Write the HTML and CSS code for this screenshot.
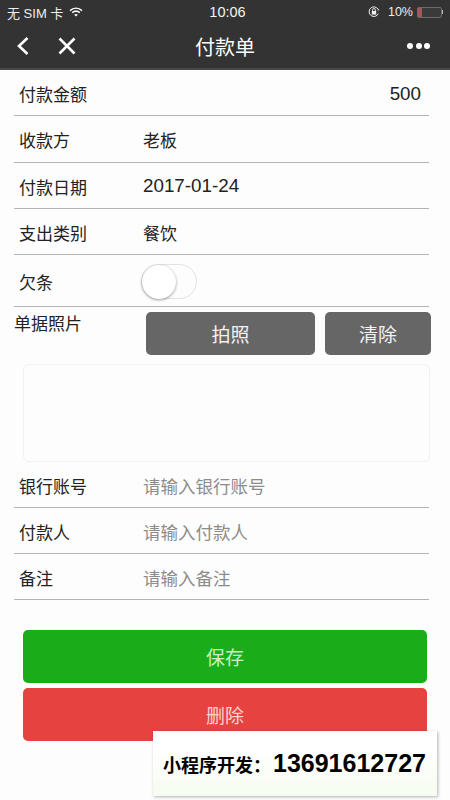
FILE: index.html
```html
<!DOCTYPE html>
<html lang="zh">
<head>
<meta charset="utf-8">
<title>付款单</title>
<link rel="stylesheet" href="styles.css">
</head>
<body>
<div class="page">
  <header class="top">
    <div class="status">
      <div class="status-left">
        <span>无 SIM 卡</span>
        <svg class="wifi" width="14" height="10" viewBox="0 0 14 10"><path d="M1 3.600C4.600.4 9.400.4 13 3.600" fill="none" stroke="#fff" stroke-width="1.500"/><path d="M3.200 5.700c2.400-2 5.200-2 7.600 0" fill="none" stroke="#fff" stroke-width="1.500"/><path d="M5.200 7.700c1.100-.9 2.500-.9 3.600 0L7 9.600z" fill="#fff"/></svg>
      </div>
      <div class="clock">10:06</div>
      <div class="status-right">
        <svg class="lock" width="12" height="12" viewBox="0 0 12 12"><path d="M10.300 7.600A4.800 4.800 0 1 1 10 3.200" fill="none" stroke="#eee" stroke-width="1"/><path d="M11.400 4.200 9.400 4.400 10 2.400z" fill="#eee"/><rect x="3.800" y="5" width="4.400" height="3.600" fill="#eee"/><path d="M4.600 5V3.900a1.400 1.400 0 0 1 2.800 0V5" fill="none" stroke="#eee" stroke-width=".9"/></svg>
        <span class="pct">10%</span>
        <span class="battery"><span class="battery-level"></span></span>
        <span class="battery-tip"></span>
      </div>
    </div>
    <nav class="nav">
      <div class="nav-left">
        <svg width="14" height="20" viewBox="0 0 14 20"><path d="M11.500 2 3 10l8.500 8" fill="none" stroke="#fff" stroke-width="2.600"/></svg>
        <svg width="20" height="20" viewBox="0 0 20 20"><path d="M2.500 2.500l15 15M17.500 2.500l-15 15" fill="none" stroke="#fff" stroke-width="2.600"/></svg>
      </div>
      <div class="nav-title">付款单</div>
      <div class="dots"><i></i><i></i><i></i></div>
    </nav>
  </header>

  <section class="rows">
    <div class="row"><span class="label">付款金额</span><span class="value num right">500</span></div>
    <div class="row"><span class="label">收款方</span><span class="value">老板</span></div>
    <div class="row"><span class="label">付款日期</span><span class="value num">2017-01-24</span></div>
    <div class="row"><span class="label">支出类别</span><span class="value">餐饮</span></div>
    <div class="row row-switch"><span class="label">欠条</span><span class="switch"><span class="knob"></span></span></div>
  </section>

  <section class="photo">
    <div class="photo-head">
      <span class="photo-label">单据照片</span>
      <button class="btn-gray btn-shot">拍照</button>
      <button class="btn-gray btn-clear">清除</button>
    </div>
    <div class="photo-box"></div>
  </section>

  <section class="rows rows-lower">
    <div class="row"><span class="label">银行账号</span><span class="value hint">请输入银行账号</span></div>
    <div class="row"><span class="label">付款人</span><span class="value hint">请输入付款人</span></div>
    <div class="row"><span class="label">备注</span><span class="value hint">请输入备注</span></div>
  </section>

  <section class="actions">
    <button class="btn-main btn-save">保存</button>
    <button class="btn-main btn-delete">删除</button>
  </section>

  <aside class="ad"><span class="ad-cn">小程序开发：</span><span class="ad-num">13691612727</span></aside>
</div>
</body>
</html>
```
FILE: styles.css
```css
* { box-sizing: border-box; }
html, body { margin: 0; padding: 0; }
body {
  width: 450px;
  height: 800px;
  overflow: hidden;
  background: #fdfdfd;
  font-family: "Liberation Sans", "Noto Sans CJK SC", sans-serif;
  color: #222;
}
.page { position: relative; width: 450px; height: 800px; }

.top {
  height: 70px;
  background: #333333;
  border-bottom: 2px solid #484848;
  color: #fff;
}
.status {
  height: 24px;
  padding: 0 7px;
  display: grid;
  grid-template-columns: 1fr auto 1fr;
  align-items: center;
  font-size: 13px;
  color: #eee;
}
.status-left { display: flex; align-items: center; gap: 6px; }
.wifi { margin-top: -1px; }
.clock { font-size: 14.500px; color: #f4f4f4; margin-left: 5px; }
.status-right { display: flex; align-items: center; justify-content: flex-end; }
.lock { margin-right: 8px; }
.pct { margin-right: 4px; font-size: 12.500px; }
.battery {
  display: block;
  width: 25px;
  height: 11px;
  border: 1px solid #6b6b6b;
  border-radius: 2px;
  background: #3a3a3a;
}
.battery-level { display: block; width: 4px; height: 100%; background: #a8555a; }
.battery-tip { display: block; width: 1px; height: 4px; background: #bbb; }

.nav {
  height: 44px;
  padding: 0 20px;
  display: grid;
  grid-template-columns: 1fr auto 1fr;
  align-items: center;
}
.nav-left { display: flex; align-items: center; gap: 27px; margin-left: -4px; }
.nav-title { font-size: 20px; }
.dots { display: flex; justify-content: flex-end; gap: 2.500px; }
.dots i { display: block; width: 6px; height: 6px; border-radius: 50%; background: #fff; }

.rows { padding: 0 21px 0 14px; }
.row {
  height: 46.300px;
  display: flex;
  align-items: center;
  border-bottom: 1px solid #b4b4b4;
  font-size: 17px;
  padding: 2px 0 0 5px;
}
.rows-lower .row { height: 46px; }
.label { width: 124px; flex: none; }
.value { flex: 1; }
.num { font-size: 18.800px; }
.right { text-align: right; padding-right: 8px; }
.hint { color: #8c8c8c; font-size: 17.500px; }
.row-switch { height: 52px; padding-top: 1px; }

.switch {
  position: relative;
  display: block;
  width: 56px;
  height: 35px;
  margin-left: -2px;
  border: 1px solid #e2e2e2;
  border-radius: 18px;
  background: #fdfdfd;
}
.knob {
  display: block;
  width: 34px;
  height: 34px;
  border-radius: 50%;
  background: #fff;
  box-shadow: 0 1px 3px rgba(0, 0, 0, 0.4);
}

.photo-head {
  height: 57px;
  padding: 5px 19px 0 14px;
  display: flex;
  align-items: flex-start;
}
.photo-label { width: 132px; flex: none; font-size: 17px; line-height: 26px; }
.btn-gray {
  height: 43px;
  border: 0;
  border-radius: 5px;
  background: #666;
  color: #f2f2f2;
  font: inherit;
  font-size: 19px;
  padding: 0;
}
.btn-shot { width: 169px; margin-right: 10px; }
.btn-clear { width: 106px; }
.photo-box {
  height: 98px;
  margin: 0 20px 0 23px;
  border: 1px solid #f1f1f1;
  border-radius: 6px;
  background: #fdfdfd;
}

.actions {
  padding: 30px 23px 0;
  display: flex;
  flex-direction: column;
  gap: 5px;
}
.btn-main {
  display: block;
  width: 100%;
  height: 53px;
  border: 0;
  border-radius: 5px;
  font: inherit;
  font-size: 19px;
  padding: 0;
}
.btn-save { background: #1aad19; color: #c8f0c8; }
.btn-delete { background: #e64340; color: #f9d3d2; }

.ad {
  position: absolute;
  left: 153px;
  top: 731px;
  width: 284px;
  height: 65px;
  background: linear-gradient(#fff 30%, #f5fcef);
  box-shadow: 1px 1px 3px rgba(0, 0, 0, 0.3);
  display: flex;
  align-items: center;
  padding-left: 10px;
  color: #000;
  font-weight: 700;
}
.ad-cn { font-size: 18px; }
.ad-num { font-size: 25px; margin-left: 2px; }
```
